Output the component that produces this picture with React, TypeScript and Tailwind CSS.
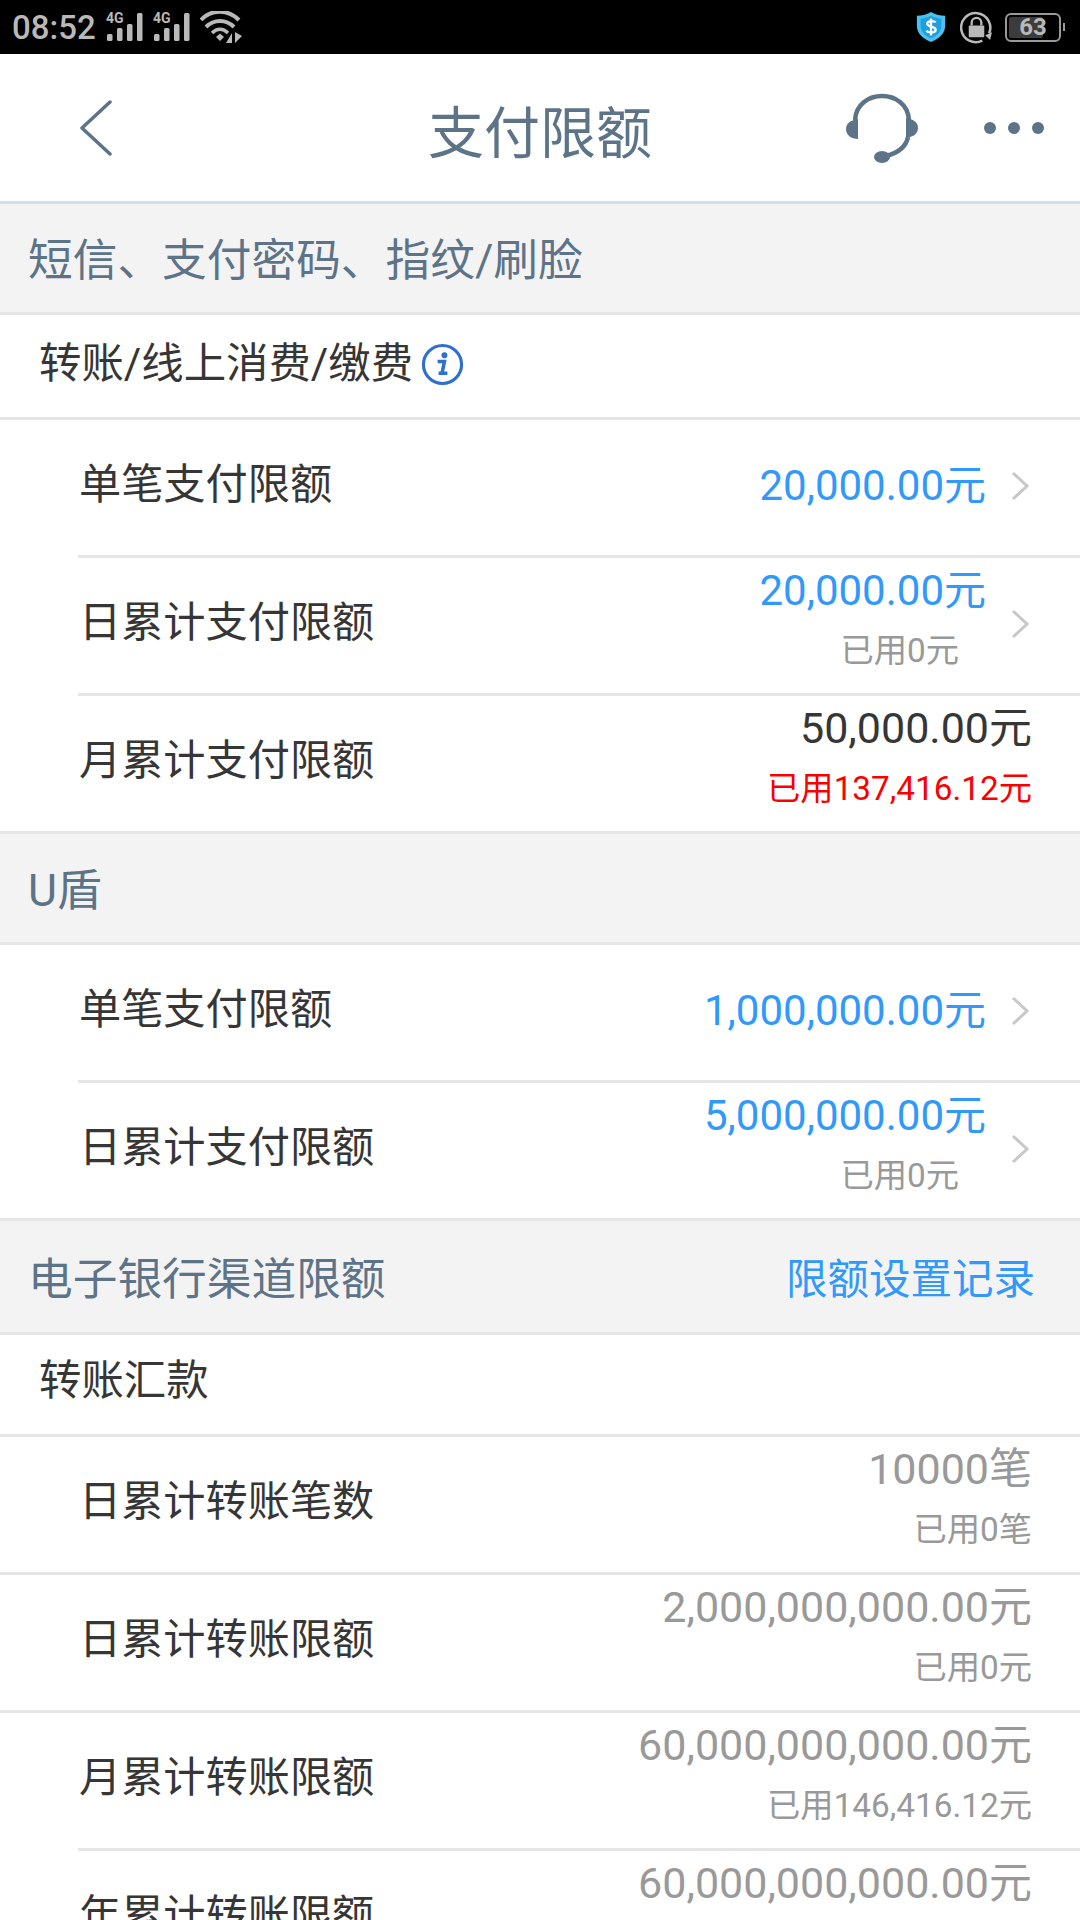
const font = "font-['Roboto','Noto_Sans_CJK_SC',sans-serif]";

interface LimitRow {
  label: string;
  value: string;
  used?: string;
  tone: 'blue' | 'dark' | 'gray';
  usedRed?: boolean;
  fullLine?: boolean;
}

const valueTone = {
  blue: 'text-[42px] text-[#3099fa]',
  dark: 'text-[43px] text-[#363636]',
  gray: 'text-[43px] text-[#999999]',
};

function Signal({ className }: { className?: string }) {
  return (
    <svg width="37" height="32" viewBox="0 -2 37 32" className={className}>
      <text x="0" y="10" fontSize="14" fontWeight="700" fill="#b9b9b9" fontFamily="Roboto">4G</text>
      <rect x="1" y="21" width="5.5" height="7" rx="1.5" fill="#b9b9b9" />
      <rect x="11" y="15" width="5.5" height="13" rx="1.5" fill="#b9b9b9" />
      <rect x="21" y="11" width="5.5" height="17" rx="1.5" fill="#b9b9b9" />
      <rect x="31" y="0" width="5.5" height="28" rx="1.5" fill="#b9b9b9" />
    </svg>
  );
}

function StatusBar() {
  return (
    <div className="h-[54px] bg-black flex items-center justify-between pl-[12px] pr-[15px] text-[#b9b9b9]">
      <div className="flex items-center">
        <span className="text-[33px] font-medium leading-none">08:52</span>
        <Signal className="ml-[10px]" />
        <Signal className="ml-[10px]" />
        <svg width="44" height="32" viewBox="0 0 44 32" className="ml-[10px]">
          <path d="M1 9 C11 -2 28 -2 39 9" fill="none" stroke="#b9b9b9" strokeWidth="4" />
          <path d="M6 16 C14 8 26 8 34 16" fill="none" stroke="#b9b9b9" strokeWidth="4" />
          <path d="M12 22 C17 17 23 17 28 22" fill="none" stroke="#b9b9b9" strokeWidth="3.5" />
          <path d="M16 26 L20 22.5 L24 26 L20 30 Z" fill="#b9b9b9" />
          <path d="M26 32 L32 22 L32 32 Z M35 21 L35 32 L42 25 Z" fill="#b9b9b9" />
        </svg>
      </div>
      <div className="flex items-center">
        <svg width="32" height="32" viewBox="0 0 32 34">
          <path d="M16 1 C21 4 26 5 31 5 L31 16 C31 24 24 30 16 33 C8 30 1 24 1 16 L1 5 C6 5 11 4 16 1 Z" fill="#4cc2f1" />
          <path d="M16 5 C20 7 24 8 27 8 L27 16 C27 22 22 27 16 29 C10 27 5 22 5 16 L5 8 C8 8 12 7 16 5 Z" fill="#1f9fe0" />
          <path d="M21 12 C19 10 12 10 12 13.5 C12 17.5 21 15.5 21 20 C21 23.5 13 23.5 11 21 M16 8 V26" fill="none" stroke="#ffffff" strokeWidth="2.4" />
        </svg>
        <svg width="33" height="33" viewBox="0 0 34 34" className="ml-[13px]">
          <path d="M30 23 A15 15 0 1 0 23 30.5" fill="none" stroke="#b9b9b9" strokeWidth="2.6" />
          <path d="M26 25 L33 22 L31 30 Z" fill="#b9b9b9" />
          <rect x="9" y="15" width="16" height="12" rx="1" fill="#b9b9b9" />
          <path d="M12 15 V12 A5 5 0 0 1 22 12 V15" fill="none" stroke="#b9b9b9" strokeWidth="2.4" />
        </svg>
        <div className="ml-[12px] flex items-center">
          <div className="w-[56px] h-[29px] rounded-[6px] border-[2px] border-[#9a9a9a] p-[2px] relative">
            <div className="h-full w-[34px] rounded-[2px] bg-[#3c3c3c]" />
            <span className="absolute inset-0 flex items-center justify-center text-[24px] font-bold leading-none">63</span>
          </div>
          <div className="ml-[2px] w-[2px] h-[8px] bg-[#9a9a9a]" />
        </div>
      </div>
    </div>
  );
}

function NavBar() {
  return (
    <div className="relative h-[150px] bg-white border-b-[3px] border-[#d5dfea] flex items-center justify-between text-[#5d7488]">
      <svg width="32" height="56" viewBox="0 0 32 56" className="ml-[80px]">
        <path d="M30 2 L2 28 L30 54" fill="none" stroke="#5d7488" strokeWidth="3.5" strokeLinecap="round" strokeLinejoin="round" />
      </svg>
      <span className="absolute left-0 right-0 text-center text-[56px] leading-none pt-[12px]">支付限额</span>
      <div className="flex items-center pr-[36px]">
        <svg width="72" height="70" viewBox="0 0 72 70">
          <path d="M9 27 C11 -5 61 -5 63 27" fill="none" stroke="#5d7488" strokeWidth="4.5" />
          <path d="M12 26 L12 46 C5 46 0 42 0 36 C0 30 5 27 12 26 Z" fill="#5d7488" />
          <path d="M60 25 L60 45 C67 44 72 41 72 35 C72 29 67 26 60 25 Z" fill="#5d7488" />
          <path d="M62 44 C60 54 52 60 40 63" fill="none" stroke="#5d7488" strokeWidth="4.5" />
          <ellipse cx="36" cy="64" rx="8" ry="6" fill="#5d7488" />
        </svg>
        <div className="ml-[66px] flex items-center gap-[12px]">
          <span className="w-[12px] h-[12px] rounded-full bg-[#5d7488]" />
          <span className="w-[12px] h-[12px] rounded-full bg-[#5d7488]" />
          <span className="w-[12px] h-[12px] rounded-full bg-[#5d7488]" />
        </div>
      </div>
    </div>
  );
}

function SectionHeader({ title, action }: { title: string; action?: string }) {
  return (
    <div className={`${action ? 'h-[114px]' : 'h-[111px]'} bg-[#f3f3f4] border-b-[3px] border-[#e6e6e6] flex items-center justify-between pt-[7px] pl-[28px] pr-[45px]`}>
      <span className="text-[44.7px] leading-none text-[#5d7488]">{title}</span>
      {action && <span className="text-[41.5px] leading-none text-[#3099fa]">{action}</span>}
    </div>
  );
}

function SubHeader({ short, children }: { short?: boolean; children: React.ReactNode }) {
  return (
    <div className={`${short ? 'h-[102px] pb-[7px]' : 'h-[105px] pb-[4px]'} bg-white border-b-[3px] border-[#e6e6e6] flex items-center pl-[39px] text-[42.4px] leading-none text-[#363636]`}>
      {children}
    </div>
  );
}

function Row({ label, value, used, tone, usedRed, fullLine }: LimitRow) {
  const hasArrow = tone === 'blue';
  return (
    <div className={`bg-white ${fullLine ? '' : 'pl-[78px]'}`}>
      <div className={`h-[138px] border-b-[3px] border-[#e6e6e6] flex items-center justify-between pr-[48px] ${fullLine ? 'pl-[79px]' : 'pl-[1px]'}`}>
        <span className="text-[42.2px] leading-none text-[#363636] pb-[5px]">{label}</span>
        <div className="flex items-center">
          <div className={`flex flex-col items-end ${used ? 'pb-[14px]' : 'pb-[4px]'}`}>
            <span className={`leading-none ${valueTone[tone]}`}>{value}</span>
            {used && (
              <span className={`mt-[22px] text-[33.3px] leading-none ${usedRed ? 'text-[#fc0000]' : 'text-[#999999]'} ${hasArrow ? 'mr-[27px]' : ''}`}>
                {used}
              </span>
            )}
          </div>
          {hasArrow && (
            <svg width="18" height="30" viewBox="0 0 18 30" className="ml-[25px] mr-[3px] mb-[3px]">
              <path d="M2 2 L16 15 L2 28" fill="none" stroke="#c8c8c8" strokeWidth="3" />
            </svg>
          )}
        </div>
      </div>
    </div>
  );
}

export default function App() {
  return (
    <div className={`w-[1080px] h-[1920px] overflow-hidden bg-white ${font}`}>
      <StatusBar />
      <NavBar />
      <SectionHeader title="短信、支付密码、指纹/刷脸" />
      <SubHeader>
        转账/线上消费/缴费
        <svg width="43" height="43" viewBox="0 0 44 44" className="ml-[8px]">
          <circle cx="22" cy="22" r="19.5" fill="none" stroke="#2f6fd0" strokeWidth="3.2" />
          <circle cx="24" cy="12.5" r="3" fill="#2f6fd0" />
          <path d="M17 19 H24 L21.5 31 H27 M21 31 H18" fill="none" stroke="#2f6fd0" strokeWidth="3.6" />
        </svg>
      </SubHeader>
      <Row label="单笔支付限额" value="20,000.00元" tone="blue" />
      <Row label="日累计支付限额" value="20,000.00元" used="已用0元" tone="blue" />
      <Row label="月累计支付限额" value="50,000.00元" used="已用137,416.12元" tone="dark" usedRed fullLine />
      <SectionHeader title="U盾" />
      <Row label="单笔支付限额" value="1,000,000.00元" tone="blue" />
      <Row label="日累计支付限额" value="5,000,000.00元" used="已用0元" tone="blue" fullLine />
      <SectionHeader title="电子银行渠道限额" action="限额设置记录" />
      <SubHeader short>转账汇款</SubHeader>
      <Row label="日累计转账笔数" value="10000笔" used="已用0笔" tone="gray" fullLine />
      <Row label="日累计转账限额" value="2,000,000,000.00元" used="已用0元" tone="gray" fullLine />
      <Row label="月累计转账限额" value="60,000,000,000.00元" used="已用146,416.12元" tone="gray" />
      <Row label="年累计转账限额" value="60,000,000,000.00元" used="已用146,416.12元" tone="gray" />
    </div>
  );
}
